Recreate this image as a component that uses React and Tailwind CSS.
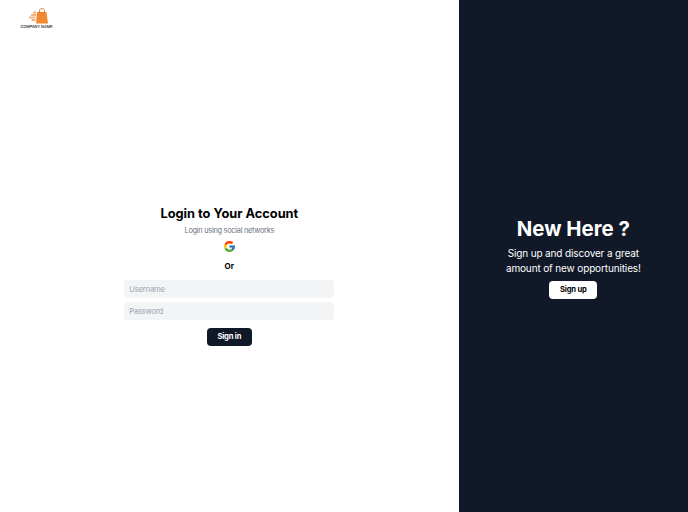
import React from 'react';

const Logo = () => (
  <div className="flex flex-col items-center w-[31px] ml-[21px] pt-[8px] h-[38px]">
    <svg width="20" height="16" viewBox="0 0 20 16" className="ml-[4px]">
      <path d="M8 4 H17.5 L19 15.5 H7 Z" fill="#f08a32" />
      <path d="M10.5 5 V2.5 C10.5 0 15.5 0 15.5 2.5 V5" fill="none" stroke="#d9822f" strokeWidth="1" />
      <g fill="#f6b27a">
        <rect x="4" y="3.5" width="3" height="2" />
        <rect x="2" y="6" width="5" height="2" />
        <rect x="0" y="8.5" width="6.5" height="2" />
        <rect x="2.5" y="11" width="4" height="2" />
      </g>
    </svg>
    <span className="text-[3.8px] leading-[5px] whitespace-nowrap font-medium text-[#222]">COMPANY NAME</span>
  </div>
);

const GoogleIcon = () => (
  <svg width="13" height="13" viewBox="0 0 48 48">
    <path fill="#FFC107" d="M43.6 20.1H42V20H24v8h11.3C33.7 32.7 29.2 36 24 36c-6.6 0-12-5.4-12-12s5.4-12 12-12c3.1 0 5.9 1.2 8 3l5.7-5.7C34 6.1 29.3 4 24 4 13 4 4 13 4 24s9 20 20 20 20-9 20-20c0-1.3-.1-2.7-.4-3.9z" />
    <path fill="#FF3D00" d="M6.3 14.7l6.6 4.8C14.7 15.1 19 12 24 12c3.1 0 5.9 1.2 8 3l5.7-5.7C34 6.1 29.3 4 24 4 16.3 4 9.7 8.3 6.3 14.7z" />
    <path fill="#4CAF50" d="M24 44c5.2 0 9.9-2 13.4-5.2l-6.2-5.2C29.2 35.1 26.7 36 24 36c-5.2 0-9.6-3.3-11.3-7.9l-6.5 5C9.5 39.6 16.2 44 24 44z" />
    <path fill="#1976D2" d="M43.6 20.1H42V20H24v8h11.3c-.8 2.2-2.2 4.2-4.1 5.6l6.2 5.2C37 39.2 44 34 44 24c0-1.3-.1-2.7-.4-3.9z" />
  </svg>
);

const App = () => {
  return (
    <div className="h-screen w-full flex font-['Inter',sans-serif]">
      {/* Login side */}
      <div className="w-2/3 bg-white flex flex-col">
        <Logo />
        <div className="flex-1 flex flex-col items-center justify-center">
          <h1 className="text-[12.8px] leading-[20px] font-bold text-black">Login to Your Account</h1>
          <p className="text-[7.4px] tracking-[-0.28px] leading-[10px] text-[#6b7280] mt-[2px]">Login using social networks</p>
          <div className="mt-[4px] flex"><GoogleIcon /></div>
          <p className="text-[8px] leading-[10px] font-bold text-black mt-[8px]">Or</p>
          <input placeholder="Username" className="w-[210px] h-[18px] mt-[9px] rounded-[4px] bg-[#f3f4f6] px-[5px] text-[7.6px] tracking-[-0.2px] placeholder:text-[#9ca3af] outline-none" />
          <input placeholder="Password" className="w-[210px] h-[18px] mt-[4px] rounded-[4px] bg-[#f3f4f6] px-[5px] text-[7.6px] tracking-[-0.2px] placeholder:text-[#9ca3af] outline-none" />
          <button type="button" className="mt-[8px] w-[45px] h-[18px] rounded-[4px] bg-[#111827] text-white text-[7.6px] tracking-[-0.2px] font-bold">Sign in</button>
        </div>
      </div>

      {/* Sign up side */}
      <div className="w-1/3 bg-[#111827] flex flex-col items-center justify-center text-white pt-[2px]">
        <h2 className="text-[20.4px] leading-[28px] font-bold">New Here ?</h2>
        <p className="text-[10px] tracking-[-0.14px] leading-[15px] text-center mt-[3px]">Sign up and discover a great<br />amount of new opportunities!</p>
        <button type="button" className="mt-[5px] w-[48px] h-[18px] rounded-[4px] bg-white text-black text-[7.6px] tracking-[-0.2px] font-bold">Sign up</button>
      </div>
    </div>
  );
};

export default App;
